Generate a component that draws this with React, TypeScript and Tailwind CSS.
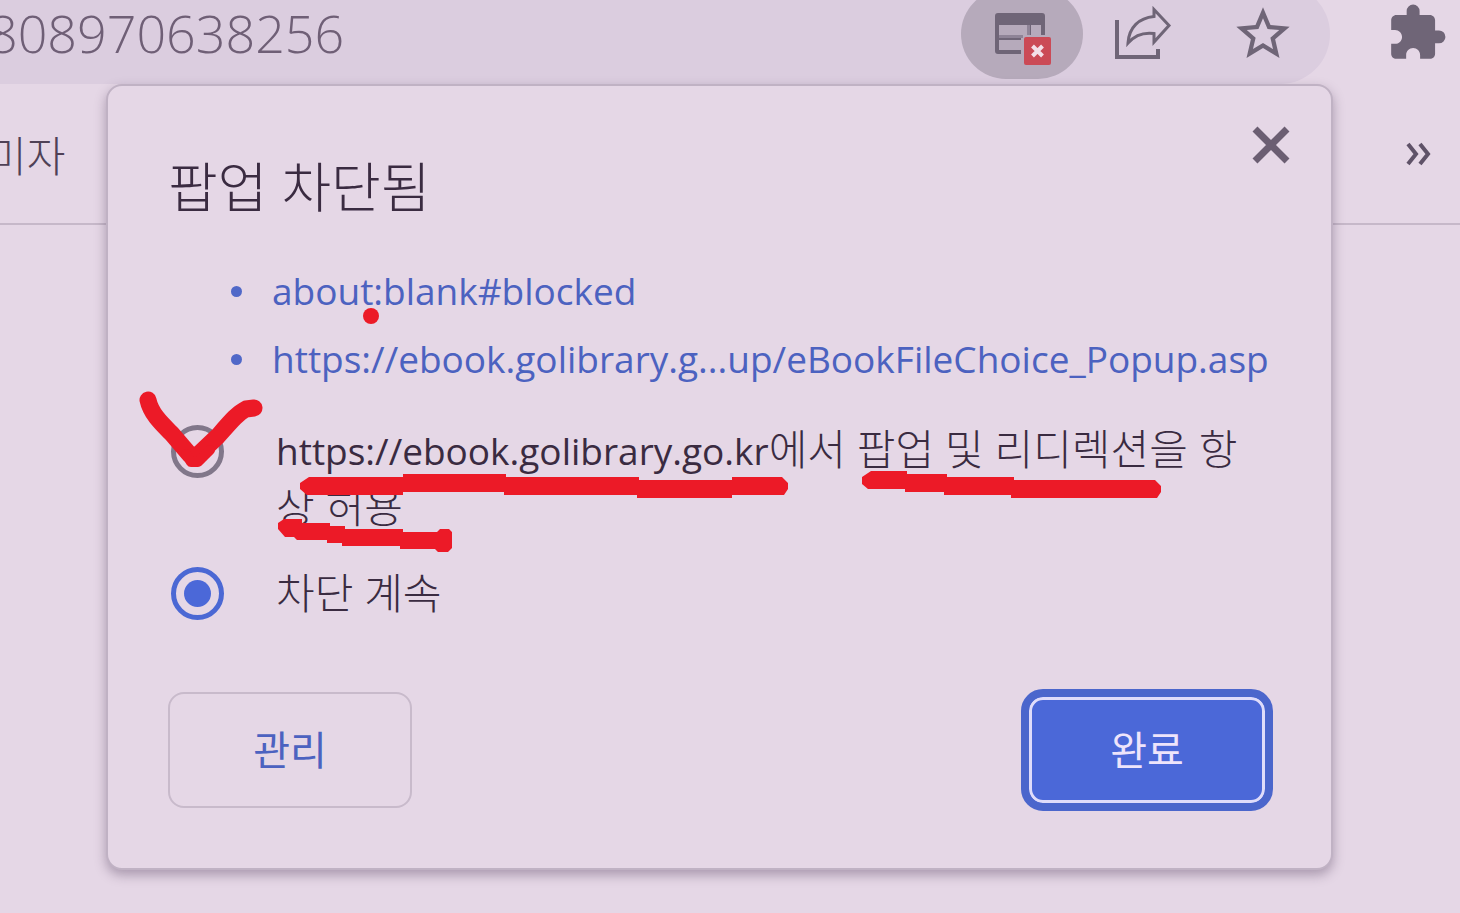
import { useState } from 'react';
import { MdExtension, MdStarBorder } from 'react-icons/md';

function BlockedPageIcon() {
  return (
    <svg viewBox="0 0 60 54" className="h-[54px] w-[60px]" aria-hidden="true">
      <path fill="#6f6577" d="M3 0h44a3 3 0 0 1 3 3v20H26v18H3a3 3 0 0 1-3-3V3a3 3 0 0 1 3-3z" />
      <path fill="#b6aabb" d="M4 12h28v10H4zM36 12h10v12H36zM4 27h24v10H4z" />
      <path fill="#8f8497" d="M4 22h28v3H4zM32 12h3v12h-3z" />
      <path fill="#b6aabb" d="M28 22h29v32H28z" />
      <path fill="#6f6577" d="M4 37h22v4H4z" />
      <rect x="29" y="24" width="27" height="28" rx="2" fill="#cb4a56" />
      <path stroke="#f3dfe8" strokeWidth="4" d="M37.500 33l10 10M47.500 33l-10 10" />
    </svg>
  );
}

function ShareIcon() {
  return (
    <svg viewBox="0 0 64 64" className="size-16" fill="none" stroke="#6f6577" strokeWidth="4" aria-hidden="true">
      <path d="M6 18v37h41v-8" />
      <path strokeWidth="3" d="M43 7.500L58 23.500 43 40V31.500C32 30 24 33 17 41 18 25 28 16 43 14.500z" />
    </svg>
  );
}

// hand drawn notes on top of the dialog
function Marks() {
  return (
    <svg
      viewBox="108 86 1222 782"
      className="pointer-events-none absolute top-0 left-0 h-[782px] w-[1222px] max-w-none"
      fill="#ec1a27"
      aria-hidden="true"
    >
      <circle cx="371" cy="316" r="8" />
      <g fill="none" stroke="#ec1a27" strokeLinecap="round" strokeLinejoin="round">
        <path strokeWidth="17" d="M148 400C151 414 162 424 172 434L190 455 198 455 218 436C232 420 238 413 246 409L254 408" />
        <path strokeWidth="10" d="M186 454l5 8h7l12-12" />
      </g>
      <path d="M309 477H403V474H506V477H639V480H732V477H782L788 483V489L784 495H732V498H637V495H504V492H403V495H307L300 489V483Z" />
      <path d="M871 471H907V474H947V477H1014V480H1155L1161 486V492L1157 498H1011V495H944V492H905V489H868L862 484V477Z" />
      <path d="M284 519H302V523H330V526H345V529H403V532H437L440 529H449L452 532V548L448 552H438L435 549H400V546H342V543H327V540H297L294 537H285L278 529V523Z" />
    </svg>
  );
}

const blocked = ['about:blank#blocked', 'https://ebook.golibrary.g...up/eBookFileChoice_Popup.asp'];

const radioClass =
  'size-[53px] shrink-0 appearance-none rounded-full border-[5px] border-[#81778a] bg-clip-content p-2 checked:border-[#4b68d4] checked:bg-[#4b68d8]';

export default function App() {
  const [url, setUrl] = useState('808970638256');
  const [choice, setChoice] = useState('block');

  return (
    <main className="relative min-h-screen overflow-hidden bg-[#e5d7e6] font-['Open_Sans','Noto_Sans_CJK_KR',sans-serif] text-[#3a2b41]">
      <header className="flex h-[84px] overflow-hidden">
        <div className="-mt-4 flex h-[100px] min-w-0 flex-1 items-center rounded-r-full bg-[#dbcddf] pr-[35px]">
          <input
            type="text"
            aria-label="주소"
            value={url}
            onChange={e => setUrl(e.target.value)}
            className="-ml-3 h-[100px] min-w-0 flex-1 pb-1 text-[52px] font-light text-[#6f5f76] outline-none"
          />
          <button type="button" aria-label="팝업 차단됨" className="flex h-[90px] w-[122px] items-center justify-center rounded-full bg-[#b6aabb] pt-3 pl-1.5">
            <BlockedPageIcon />
          </button>
          <button type="button" aria-label="공유" className="ml-7">
            <ShareIcon />
          </button>
          <button type="button" aria-label="북마크" className="ml-14">
            <MdStarBorder className="size-16 text-[#6f6577]" />
          </button>
        </div>
        <div className="flex h-[66px] w-[130px] items-center justify-end pr-3">
          <button type="button" aria-label="확장 프로그램">
            <MdExtension className="size-[62px] text-[#6f6577]" />
          </button>
        </div>
      </header>

      <nav className="flex h-[141px] items-center justify-between border-b-2 border-[#c6b8c9] pr-7">
        <a href="#" className="-ml-3 pt-1 text-[42px] font-light text-[#4f4156]">미자</a>
        <button type="button" aria-label="더보기">
          <svg viewBox="0 0 26 24" className="h-6 w-[26px]" fill="none" stroke="#5f5268" strokeWidth="4" aria-hidden="true">
            <path d="M2 2l8 10-8 10M14 2l8 10-8 10" />
          </svg>
        </button>
      </nav>

      <div className="absolute inset-x-0 top-[84px] pr-[127px] pl-[106px]">
        <section
          role="dialog"
          aria-labelledby="popup-title"
          className="relative rounded-[16px] border-2 border-[#c0b2c4] bg-[#e5d7e6] pt-[69px] pr-[58px] pb-[57px] pl-[60px] shadow-[0_5px_12px_rgba(80,60,90,0.4)]"
        >
          <button type="button" aria-label="닫기" className="absolute top-[39px] right-10">
            <svg viewBox="0 0 40 40" className="size-10" stroke="#6b5e72" strokeWidth="7" aria-hidden="true">
              <path d="M4 4l32 32M36 4L4 36" />
            </svg>
          </button>

          <h1 id="popup-title" className="text-[54px] leading-16 font-light">팝업 차단됨</h1>

          <ul className="mt-[38px] text-[37px] leading-[68px] text-[#4c62c0]">
            {blocked.map(item => (
              <li key={item} className="flex items-center gap-[30px] pl-[63px]">
                <span className="size-[11px] shrink-0 rounded-full bg-[#5068c8]" />
                <a href="#" className="whitespace-nowrap">{item}</a>
              </li>
            ))}
          </ul>

          <form className="mt-7" onSubmit={e => e.preventDefault()}>
            <label className="flex items-start gap-[52px] pr-1 pl-[3px]">
              <input type="radio" name="popup" checked={choice === 'allow'} onChange={() => setChoice('allow')} className={radioClass + ' mt-1'} />
              <span className="text-[42px] leading-14 font-light">
                <span className="text-[37px] font-normal">https://ebook.golibrary.go.kr</span>에서 팝업 및 리디렉션을 항상 허용
              </span>
            </label>
            <label className="mt-[30px] flex items-center gap-[52px] pl-[3px]">
              <input type="radio" name="popup" checked={choice === 'block'} onChange={() => setChoice('block')} className={radioClass} />
              <span className="text-[42px] leading-14 font-light">차단 계속</span>
            </label>

            <div className="mt-[68px] flex items-center justify-between">
              <button type="button" className="h-[116px] w-[244px] rounded-[16px] border-2 border-[#c8bacb] text-[40px] text-[#4c62c0]">
                관리
              </button>
              <button type="submit" className="h-[122px] w-[252px] rounded-[22px] border-8 border-[#4b66cc] bg-[#4b68d8] text-[40px] text-[#eee4fb] inset-ring-3 inset-ring-[#dfdcfa]">
                완료
              </button>
            </div>
          </form>

          <Marks />
        </section>
      </div>
    </main>
  );
}
